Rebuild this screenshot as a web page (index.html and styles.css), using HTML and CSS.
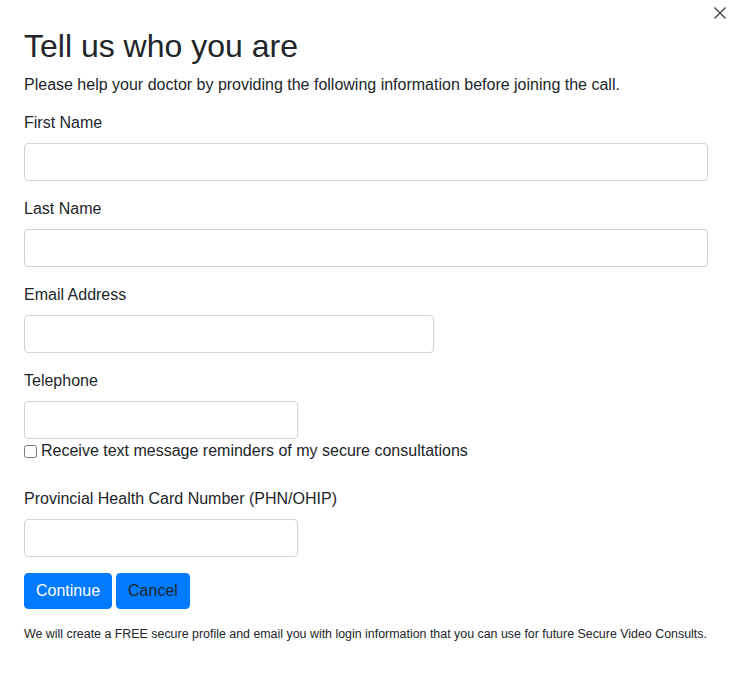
FILE: index.html
```html
<!DOCTYPE html>
<html lang="en">
<head>
<meta charset="utf-8">
<title>Tell us who you are</title>
<link rel="stylesheet" href="styles.css">
</head>
<body>
<div class="modal">
  <button class="close" type="button" aria-label="Close">
    <svg width="12" height="12" viewBox="0 0 12 12"><path d="M0.5 0.5 L11.5 11.5 M11.5 0.5 L0.5 11.5" stroke="#333" stroke-width="1.1" fill="none"/></svg>
  </button>
  <h3 class="title">Tell us who you are</h3>
  <p class="intro">Please help your doctor by providing the following information before joining the call.</p>
  <form class="form">
    <div class="group">
      <label class="label">First Name</label>
      <input class="control" type="text">
    </div>
    <div class="group">
      <label class="label">Last Name</label>
      <input class="control" type="text">
    </div>
    <div class="group">
      <label class="label">Email Address</label>
      <input class="control control-md" type="email">
    </div>
    <div class="group group-tight">
      <label class="label">Telephone</label>
      <input class="control control-sm" type="tel">
      <label class="check"><input type="checkbox" class="checkbox"> Receive text message reminders of my secure consultations</label>
    </div>
    <div class="group">
      <label class="label">Provincial Health Card Number (PHN/OHIP)</label>
      <input class="control control-sm" type="text">
    </div>
    <div class="actions">
      <button type="button" class="btn btn-primary">Continue</button>
      <button type="button" class="btn btn-cancel">Cancel</button>
    </div>
    <p class="note">We will create a FREE secure profile and email you with login information that you can use for future Secure Video Consults.</p>
  </form>
</div>
</body>
</html>
```
FILE: styles.css
```css
html, body {
  margin: 0;
  padding: 0;
  background: #fff;
}
body {
  font-family: "Liberation Sans", Arial, sans-serif;
  font-size: 16px;
  line-height: 24px;
  color: #212529;
}
.modal {
  position: relative;
  padding: 27px 25px 20px 24px;
}
.close {
  position: absolute;
  top: 7px;
  right: 7px;
  width: 12px;
  height: 12px;
  padding: 0;
  border: 0;
  background: none;
  line-height: 0;
}
.title {
  margin: 0 0 8px;
  font-size: 32px;
  line-height: 38px;
  font-weight: 400;
}
.intro {
  margin: 0 0 14px;
}
.group {
  margin-bottom: 16px;
}
.group-tight {
  margin-bottom: 24px;
}
.label {
  display: block;
  margin-bottom: 8px;
}
.control {
  display: block;
  box-sizing: border-box;
  width: 100%;
  height: 38px;
  margin: 0;
  padding: 6px 12px;
  border: 1px solid #ced4da;
  border-radius: 4px;
  font: inherit;
  background: #fff;
}
.control-md {
  width: 410px;
}
.control-sm {
  width: 274px;
}
.check {
  display: flex;
  align-items: center;
  gap: 4px;
  height: 24px;
}
.checkbox {
  margin: 0;
  width: 13px;
  height: 13px;
}
.actions {
  display: flex;
  gap: 4px;
  margin-bottom: 16px;
}
.btn {
  height: 36px;
  padding: 0 11px;
  border: 1px solid #007bff;
  border-radius: 4px;
  background: #007bff;
  font: inherit;
  cursor: pointer;
}
.btn-primary {
  color: #fff;
}
.btn-cancel {
  color: #212529;
}
.note {
  margin: 0;
  font-size: 12.42px;
  line-height: 18px;
  white-space: nowrap;
}
```
